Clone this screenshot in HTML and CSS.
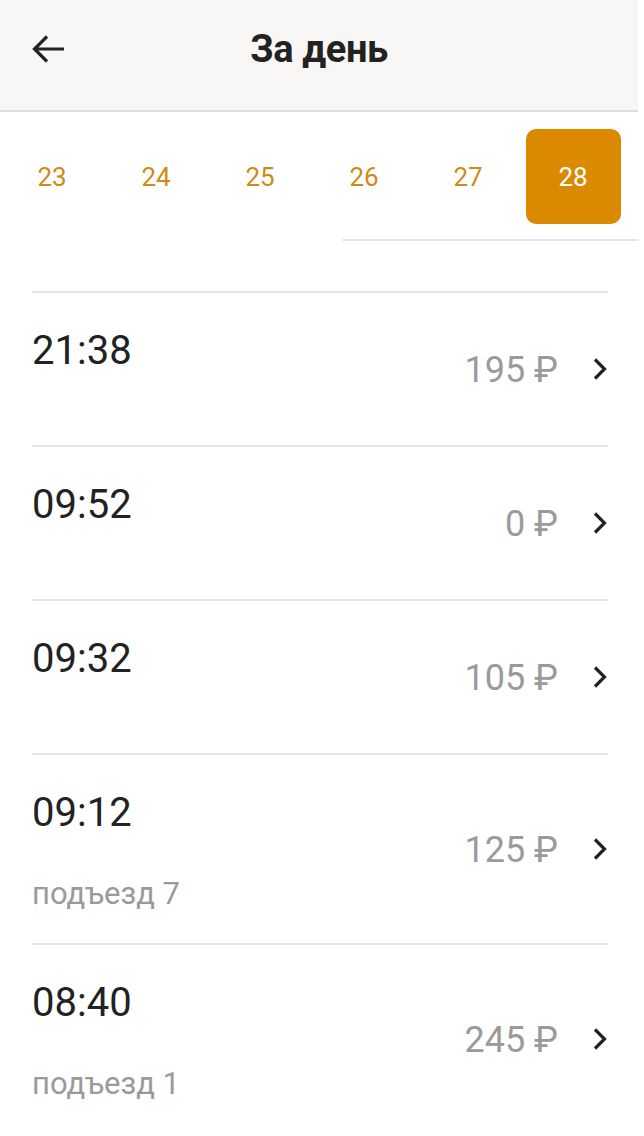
FILE: index.html
```html
<!DOCTYPE html>
<html lang="ru">
<head>
    <meta charset="UTF-8">
    <link rel="stylesheet" href="styles.css">
</head>
<body>
    <div class="screen">
        <header class="topbar">
            <div class="back">
                <svg width="34" height="32" viewBox="0 0 34 32">
                    <path d="M32 16 H3 M15 3.5 L2.5 16 L15 28.5" stroke="#222" stroke-width="3.2" fill="none" stroke-linejoin="miter"/>
                </svg>
            </div>
            <div class="title">За день</div>
            <div></div>
        </header>

        <!-- Выбор дня -->
        <div class="days">
            <div class="day">23</div>
            <div class="day">24</div>
            <div class="day">25</div>
            <div class="day">26</div>
            <div class="day">27</div>
            <div class="day"><span class="day-active">28</span></div>
        </div>
        <div class="days-line"></div>

        <!-- Поездки -->
        <div class="rides">
            <div class="ride">
                <div class="info">
                    <div class="time">21:38</div>
                    <div class="addr"></div>
                </div>
                <div class="price">195 ₽</div>
                <svg class="chevron" width="16" height="24" viewBox="0 0 16 24">
                    <path d="M3 2.5 L12.5 12 L3 21.5" stroke="#222" stroke-width="3.2" fill="none"/>
                </svg>
            </div>
            <div class="ride">
                <div class="info">
                    <div class="time">09:52</div>
                    <div class="addr"></div>
                </div>
                <div class="price">0 ₽</div>
                <svg class="chevron" width="16" height="24" viewBox="0 0 16 24">
                    <path d="M3 2.5 L12.5 12 L3 21.5" stroke="#222" stroke-width="3.2" fill="none"/>
                </svg>
            </div>
            <div class="ride">
                <div class="info">
                    <div class="time">09:32</div>
                    <div class="addr"></div>
                </div>
                <div class="price">105 ₽</div>
                <svg class="chevron" width="16" height="24" viewBox="0 0 16 24">
                    <path d="M3 2.5 L12.5 12 L3 21.5" stroke="#222" stroke-width="3.2" fill="none"/>
                </svg>
            </div>
            <div class="ride">
                <div class="info">
                    <div class="time">09:12</div>
                    <div class="addr"></div>
                    <div class="entrance">подъезд 7</div>
                </div>
                <div class="price">125 ₽</div>
                <svg class="chevron" width="16" height="24" viewBox="0 0 16 24">
                    <path d="M3 2.5 L12.5 12 L3 21.5" stroke="#222" stroke-width="3.2" fill="none"/>
                </svg>
            </div>
            <div class="ride">
                <div class="info">
                    <div class="time">08:40</div>
                    <div class="addr"></div>
                    <div class="entrance">подъезд 1</div>
                </div>
                <div class="price">245 ₽</div>
                <svg class="chevron" width="16" height="24" viewBox="0 0 16 24">
                    <path d="M3 2.5 L12.5 12 L3 21.5" stroke="#222" stroke-width="3.2" fill="none"/>
                </svg>
            </div>
        </div>
    </div>
</body>
</html>
```

FILE: styles.css
```css
:root {
    --text: #222222;
    --muted: #9a9a9a;
    --accent: #db8a00;
    --accent-text: #d08b14;
    --line: #e4e4e4;
    --bar-bg: #f8f7f5;
}

body {
    margin: 0;
    background: #ffffff;
    font-family: Roboto, 'Noto Sans', sans-serif;
    color: var(--text);
}

.screen {
    width: 638px;
    height: 1136px;
    overflow: hidden;
}

.topbar {
    height: 98px;
    padding: 0 32px 12px;
    background: var(--bar-bg);
    border-bottom: 2px solid #dedede;
    display: grid;
    grid-template-columns: 1fr auto 1fr;
    align-items: center;
}

.back {
    display: flex;
    align-items: center;
    height: 32px;
}

.title {
    font-size: 38px;
    font-weight: 700;
    letter-spacing: -0.4px;
}

.days {
    display: flex;
    padding: 17px 0 15px;
}

.day {
    width: 104px;
    height: 95px;
    display: flex;
    align-items: center;
    justify-content: center;
    font-size: 26px;
    color: var(--accent-text);
}

.day-active {
    width: 95px;
    height: 95px;
    margin-left: 2px;
    border-radius: 10px;
    background: var(--accent);
    color: #ffffff;
    display: flex;
    align-items: center;
    justify-content: center;
}

.days-line {
    height: 2px;
    margin-left: 342px;
    background: var(--line);
}

.rides {
    margin: 50px 30px 0 32px;
}

.ride {
    display: flex;
    align-items: center;
    border-top: 2px solid var(--line);
}

.info {
    flex: 1;
    padding: 36px 0 34px;
}

.time {
    font-size: 40px;
    line-height: 44px;
}

.addr {
    height: 38px;
}

.entrance {
    margin-top: 6px;
    font-size: 31px;
    line-height: 30px;
    color: var(--muted);
}

.price {
    font-size: 36px;
    color: var(--muted);
    margin-right: 34px;
    margin-top: 2px;
}
```
